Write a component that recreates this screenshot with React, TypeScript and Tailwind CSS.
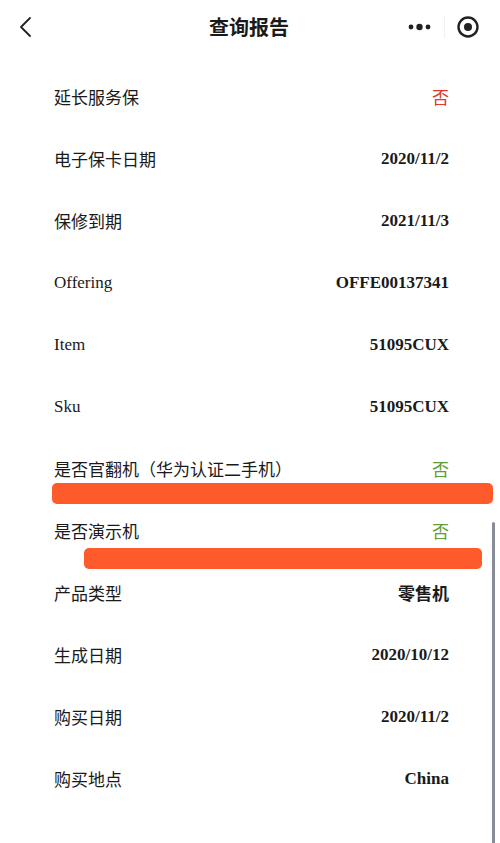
import React from 'react';

type Row = { label: string; value: string; latin?: boolean; tone?: 'red' | 'green' | 'cjk' };

const ROWS: Row[] = [
  { label: '延长服务保', value: '否', tone: 'red' },
  { label: '电子保卡日期', value: '2020/11/2' },
  { label: '保修到期', value: '2021/11/3' },
  { label: 'Offering', value: 'OFFE00137341', latin: true },
  { label: 'Item', value: '51095CUX', latin: true },
  { label: 'Sku', value: '51095CUX', latin: true },
  { label: '是否官翻机（华为认证二手机）', value: '否', tone: 'green' },
  { label: '是否演示机', value: '否', tone: 'green' },
  { label: '产品类型', value: '零售机', tone: 'cjk' },
  { label: '生成日期', value: '2020/10/12' },
  { label: '购买日期', value: '2020/11/2' },
  { label: '购买地点', value: 'China' },
];

const SANS = "font-['Noto_Sans_CJK_SC',sans-serif]";
const SERIF = "font-['Liberation_Serif','Noto_Sans_CJK_SC',serif]";

const valueClass = (row: Row) => {
  if (row.tone === 'red') return `${SANS} text-[17px] text-[#e0362c]`;
  if (row.tone === 'green') return `${SANS} text-[17px] text-[#5c9e33]`;
  if (row.tone === 'cjk') return `${SANS} text-[17px] font-bold text-[#1a1a1a]`;
  return `${SERIF} text-[17px] font-bold text-[#1a1a1a]`;
};

const App: React.FC = () => {
  return (
    <div className="relative w-[500px] h-[843px] overflow-hidden bg-white">
      {/* Header */}
      <div className="grid grid-cols-[1fr_auto_1fr] items-center h-[55px] pl-[18px] pr-[20px] pb-[2px]">
        <svg width="16" height="22" viewBox="0 0 16 22">
          <path d="M12 2 L3 11 L12 20" fill="none" stroke="#222" strokeWidth="1.8" strokeLinecap="round" strokeLinejoin="round" />
        </svg>
        <h1 className={`${SANS} text-[20px] font-bold text-[#1a1a1a] leading-none`}>查询报告</h1>
        <div className="flex items-center justify-end">
          <svg width="26" height="28" viewBox="0 0 26 28">
            <circle cx="4" cy="14" r="2.4" fill="#222" />
            <circle cx="12.5" cy="14" r="3.2" fill="#222" />
            <circle cx="21" cy="14" r="2.4" fill="#222" />
          </svg>
          <div className="w-px h-[22px] bg-[#f0f0f0] mx-[11px]" />
          <svg width="24" height="28" viewBox="0 0 24 28">
            <circle cx="12" cy="14" r="9.5" fill="none" stroke="#222" strokeWidth="2.4" />
            <circle cx="12" cy="14" r="4" fill="#222" />
          </svg>
        </div>
      </div>

      {/* Rows */}
      <div className="pt-[11px] pl-[54px] pr-[51px]">
        {ROWS.map((row, i) => (
          <div key={i} className="flex items-center justify-between h-[62px]">
            <span className={`${row.latin ? SERIF : SANS} text-[17px] text-[#1a1a1a]`}>{row.label}</span>
            <span className={valueClass(row)}>{row.value}</span>
          </div>
        ))}
      </div>

      {/* Redaction marks drawn over the rows */}
      <div className="absolute left-[52px] top-[483px] w-[441px] h-[21px] rounded-[5px] bg-[#ff5a2c] blur-[0.5px]" />
      <div className="absolute left-[84px] top-[548px] w-[398px] h-[21px] rounded-[5px] bg-[#ff5a2c] blur-[0.5px]" />

      {/* Scrollbar */}
      <div className="absolute left-[492px] top-[522px] w-[3px] h-[330px] rounded-full bg-[#878c96]" />
    </div>
  );
};

export default App;
